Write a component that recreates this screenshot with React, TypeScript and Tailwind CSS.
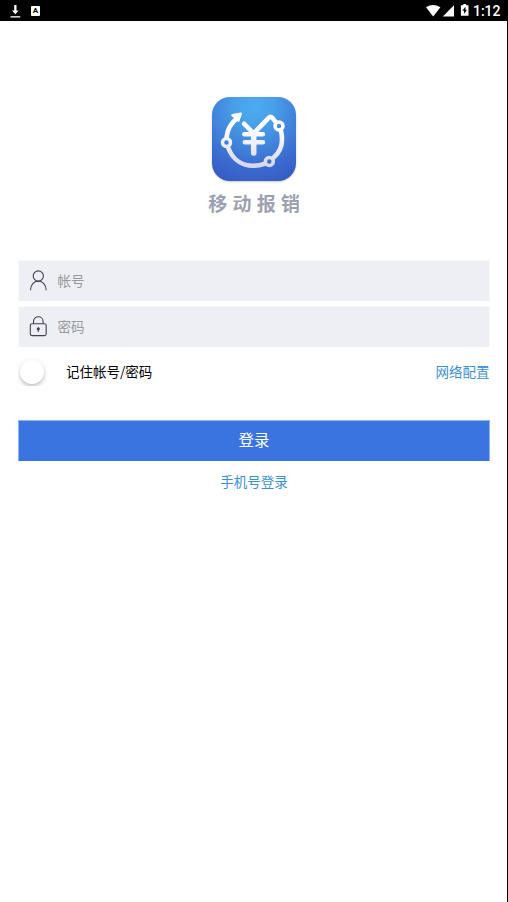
import React from "react";

const StatusBar = () => (
  <header className="h-[21px] bg-black flex items-center justify-between pl-[9px] pr-[7.5px]">
    <div className="flex items-center gap-[10px]">
      <svg width="12" height="14" viewBox="0 0 12 14" fill="#fff">
        <path d="M5.2 1h2.3v5.6h2.2L6.3 10.2 2.9 6.6h2.3z" />
        <path d="M1.5 12.2h9.7v1.3H1.5z" />
      </svg>
      <div className="mt-px w-[9px] h-[10px] rounded-[1px] bg-white text-black flex items-center justify-center text-[8px] leading-none font-bold font-['Roboto',sans-serif]">
        A
      </div>
    </div>
    <div className="flex items-center">
      <svg width="44" height="15" viewBox="0 0 44 15" fill="#fff">
        <path d="M1 4.3Q8 -.4 15.4 4.3L8.2 13.4z" />
        <path d="M29 2.3v11.2H17.8z" />
        <path d="M38.3 .9h2.8v1.3h2.4v10.5h-7.6V2.2h2.4z" />
        <path d="M40.5 3.8 37.4 7.8h1.7v3.2L41.9 6.8h-1.5z" fill="#000" />
      </svg>
      <span className="ml-[4px] pt-px text-white text-[14px] leading-[20px] font-medium font-['Roboto',sans-serif]">
        1:12
      </span>
    </div>
  </header>
);

const Logo = () => (
  <svg width="90" height="90" viewBox="-3 -3 90 90" fill="none">
    <defs>
      <radialGradient id="tile" cx="0.5" cy="0.12" r="0.95">
        <stop offset="0" stopColor="#4cacf0" />
        <stop offset="0.25" stopColor="#489fe8" />
        <stop offset="0.75" stopColor="#3b6bd0" />
        <stop offset="1" stopColor="#365bc2" />
      </radialGradient>
      <linearGradient id="ink" gradientUnits="userSpaceOnUse" x1="0" y1="15" x2="0" y2="72">
        <stop offset="0.3" stopColor="#fff" />
        <stop offset="1" stopColor="#d3d5e8" />
      </linearGradient>
      <filter id="soft" x="-10%" y="-10%" width="120%" height="120%">
        <feGaussianBlur stdDeviation="0.8" />
      </filter>
    </defs>
    <rect x="0.5" y="1.6" width="83" height="83" rx="18" fill="#555" opacity="0.45" filter="url(#soft)" />
    <rect width="84" height="84" rx="18" fill="url(#tile)" />
    <g stroke="url(#ink)" strokeWidth="4.6" strokeLinecap="round" strokeLinejoin="round">
      <path d="M24.2 22Q15.8 29 14.6 40" />
      <path d="M16.2 50.7C20.5 62 29.5 68.8 41 68.8Q47 68.8 52.3 66.8" />
      <path d="M61.7 60.6C67 56 70.1 49 70 42.3Q70 38 69 34" />
      <path d="M63.3 24.6 60.4 20.9Q58.5 18.9 56.7 20.9L41.7 36.5 32.2 26.8" />
      <path d="M32.3 37.3h18.6M32.8 45.3h18.2" strokeWidth="4.4" />
      <path d="M41.7 37.5V56" strokeWidth="5.6" />
    </g>
    <path d="M20.3 18.2 28.8 16.6 26.4 23.8z" fill="#fff" stroke="#fff" strokeWidth="2.2" strokeLinejoin="round" />
    <g stroke="url(#ink)" strokeWidth="3.5">
      <circle cx="14.5" cy="45.5" r="4" />
      <circle cx="57.3" cy="64.5" r="4" />
      <circle cx="67" cy="29" r="4" />
    </g>
  </svg>
);

const UserIcon = () => (
  <svg className="mb-[2px]" width="18" height="21" viewBox="0 0 18 21" fill="none" stroke="#414257" strokeWidth="1.1">
    <circle cx="9.3" cy="6" r="5.1" />
    <path d="M1.5 20.3C1.9 14.8 4.8 11.2 9.3 11.2s7.5 3.6 7.9 9.1" />
  </svg>
);

const LockIcon = () => (
  <svg className="mb-[2px]" width="18" height="21" viewBox="0 0 18 21" fill="none" stroke="#414257" strokeWidth="1.1">
    <rect x="1.3" y="7.7" width="15.9" height="11.9" rx="1.8" />
    <path d="M4.5 7.7V5.5C4.5 2.8 6.6.8 9.3 .8s4.8 2 4.8 4.7v2.2" />
    <circle cx="9.3" cy="12.7" r="1" fill="#414257" />
    <path d="M9.3 12.7v3" strokeWidth="1.3" />
  </svg>
);

const fields = [
  { label: "帐号", icon: <UserIcon /> },
  { label: "密码", icon: <LockIcon /> },
];

const App = () => {
  return (
    <div className="h-[902px] w-[508px] flex flex-col bg-white font-['Noto_Sans_CJK_SC',sans-serif]">
      <StatusBar />
      <main className="flex-1 border-r border-black pl-[18px] pr-[17px] pt-[73px]">
        <div className="flex flex-col items-center">
          <Logo />
          <h1 className="mt-[5px] pl-[5.5px] text-[19px] leading-[28px] font-bold tracking-[5.3px] text-[#9ba1b1]">
            移动报销
          </h1>
        </div>

        <div className="mt-[43px] flex flex-col gap-[5px]">
          {fields.map((field) => (
            <div
              key={field.label}
              className="h-[41px] border border-b-0 border-[#f7f8fa] bg-[#edeff4] flex items-center pl-[10px]"
            >
              {field.icon}
              <span className="ml-[10.5px] pb-[3px] text-[13.5px] leading-[20px] text-[#999]">{field.label}</span>
            </div>
          ))}
        </div>

        <div className="mt-[12px] h-[27px] overflow-hidden flex items-center text-[13.5px] leading-[20px]">
          <span className="ml-[2px] mb-[2px] size-[24px] rounded-full bg-white shadow-[0_2px_4px_rgba(0,0,0,0.28)]" />
          <span className="ml-[22px] pb-[4px] text-black">记住帐号/密码</span>
          <a href="#" className="ml-auto mr-[0.5px] pb-[4px] text-[#3b8fd3]">网络配置</a>
        </div>

        <button className="mt-[34px] h-[41px] w-full border border-b-0 border-[#8fb1ee] bg-[#3974e0] text-white text-[15.5px] leading-[20px] pb-[5px]">
          登录
        </button>
        <a href="#" className="mt-[10px] block text-center text-[13.5px] leading-[20px] text-[#3b8fd3]">
          手机号登录
        </a>
      </main>
    </div>
  );
};

export default App;
